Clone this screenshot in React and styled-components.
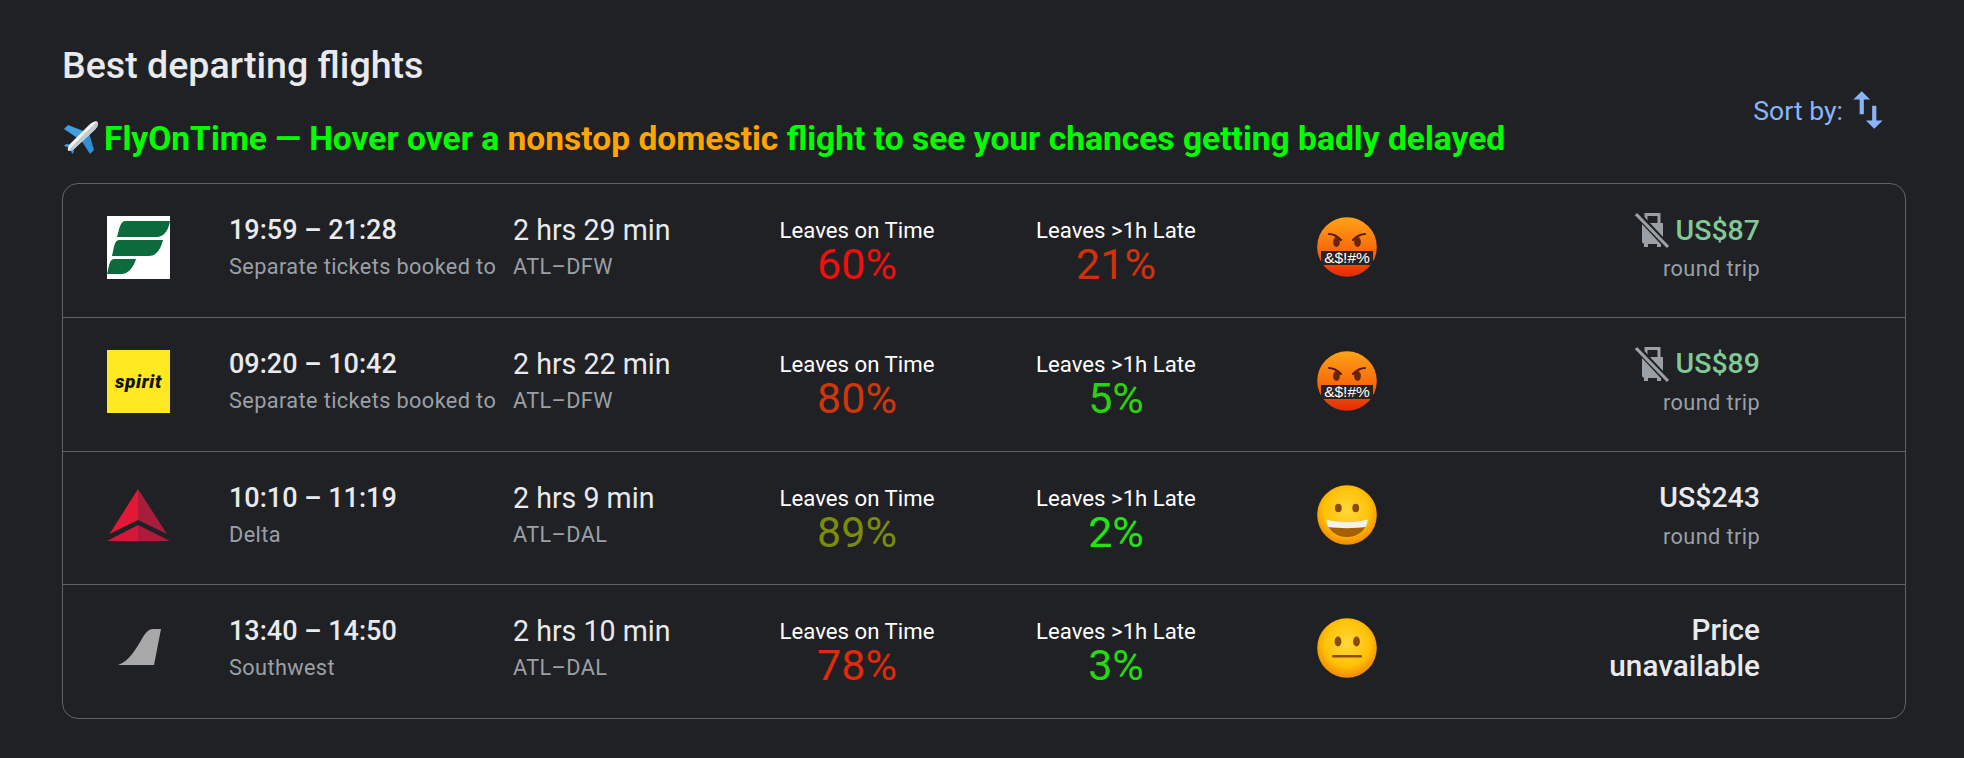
import styled, { createGlobalStyle } from 'styled-components'
import { MdSwapVert } from 'react-icons/md'

const GlobalStyle = createGlobalStyle`
  html, body {
    margin: 0;
    background: #202124;
    color: #e8eaed;
    font-family: Roboto, "Liberation Sans", sans-serif;
  }
`

const Page = styled.div`
  width: 1964px;
  height: 758px;
  box-sizing: border-box;
  padding: 45px 58px 0 62px;
  overflow: hidden;
`

const Header = styled.header`
  display: flex;
  justify-content: space-between;
  align-items: flex-start;
  height: 138px;
`

const Title = styled.h2`
  margin: 0;
  font-size: 37.6px;
  line-height: 40px;
  font-weight: 500;
  color: #e8eaed;
`

const Headline = styled.div`
  display: flex;
  align-items: center;
  gap: 4px;
  margin-top: 33px;
  height: 40px;
  font-size: 33.55px;
  font-weight: 700;
  color: #00ff00;
  white-space: pre;
`

const Orange = styled.span`
  color: #ffa500;
`

const SortBy = styled.div`
  display: flex;
  align-items: center;
  margin: 40px 13px 0 0;
  font-size: 26.6px;
  color: #8ab4f8;
`

const Panel = styled.div`
  display: flex;
  flex-direction: column;
  height: 536px;
  box-sizing: border-box;
  border: 1px solid #5f6368;
  border-radius: 16px;
`

const Row = styled.div`
  flex: 1;
  display: grid;
  grid-template-columns: 166px 284px 224px 240px 278px 184px 321px;
  align-items: start;
  padding-top: 24px;
  box-sizing: border-box;
  border-bottom: 1px solid #5f6368;

  &:last-child {
    border-bottom: none;
  }
`

const LogoCell = styled.div`
  padding: 8px 0 0 44px;
`

const LogoBox = styled.div`
  width: 63px;
  height: 63px;
  display: flex;
  align-items: center;
  justify-content: center;
  background: ${(p) => p.$bg || 'transparent'};
`

const SpiritText = styled.span`
  font-family: Roboto, sans-serif;
  font-size: 19px;
  font-weight: 900;
  font-style: italic;
  letter-spacing: 0.6px;
  color: #111;
`

const MainText = styled.div`
  margin-top: 2px;
  font-size: ${(p) => (p.$strong ? '27px' : '28.6px')};
  line-height: 40px;
  font-weight: ${(p) => (p.$strong ? 500 : 400)};
  color: #e8eaed;
  white-space: nowrap;
`

const SubText = styled.div`
  font-size: 21.7px;
  line-height: 28px;
  margin-top: 3px;
  letter-spacing: 0.4px;
  color: #9aa0a6;
  white-space: nowrap;
`

const Stat = styled.div`
  display: flex;
  flex-direction: column;
  align-items: center;
`

const StatLabel = styled.div`
  margin-top: 9px;
  font-size: 22.2px;
  line-height: 26px;
  color: #ffffff;
`

const StatValue = styled.div`
  margin-top: -2px;
  font-size: 43px;
  line-height: 46px;
  color: ${(p) => p.$color};
`

const EmojiCell = styled.div`
  display: flex;
  justify-content: center;
  padding-top: 7px;
`

const Price = styled.div`
  display: flex;
  flex-direction: column;
  align-items: flex-end;
  text-align: right;
`

const PriceLine = styled.div`
  display: flex;
  align-items: center;
  gap: 5px;
  margin-top: 2px;
  height: 40px;
  font-size: 28.5px;
  font-weight: 500;
  color: ${(p) => p.$color};
`

const RoundTrip = styled.div`
  margin-top: 5px;
  font-size: 21.7px;
  line-height: 28px;
  letter-spacing: 0.4px;
  color: #9aa0a6;
`

const Unavailable = styled.div`
  margin-top: 3px;
  font-size: 29.7px;
  line-height: 36px;
  font-weight: 500;
  color: #e8eaed;
`

const Plane = () => (
  <svg width="38" height="34" viewBox="0 0 36 34">
    <path d="M1 8 L5 4 L23 11 L16 18 Z" fill="#3f9fe0" />
    <path d="M27 33 L31 29 L26 12 L18 19 Z" fill="#2f8fd8" />
    <path d="M1 25 L3 23 L11 24 L8 27 Z" fill="#3f9fe0" />
    <path d="M9 33 L11 31 L10 24 L7 26 Z" fill="#2f8fd8" />
    <path d="M34 0.5 C36 2 35 6 31 9.5 L11 28 C9 30 5.5 30 5 29.5 C4.5 28.5 5 25 7 23 L26 4 C29 1 33 -0.5 34 0.5 Z" fill="#f1f3f4" />
    <path d="M34 0.5 C36 2 35 6 31 9.5 L11 28 C9 30 5.5 30 5 29.5 Z" fill="#c3c9ce" />
  </svg>
)

const NoBag = () => (
  <svg width="36" height="38" viewBox="0 0 36 38">
    <path d="M11 12 V3.5 H24 V16" fill="none" stroke="#9aa0a6" strokeWidth="3" />
    <path d="M8 12 H28 V30 C28 32 27 33 25 33 H10 C8 33 7 32 7 30 V13 Z" fill="#9aa0a6" />
    <rect x="9" y="33" width="4" height="3" fill="#9aa0a6" />
    <rect x="22" y="33" width="4" height="3" fill="#9aa0a6" />
    <path d="M3 4 L32 35" stroke="#202124" strokeWidth="6.5" />
    <path d="M1 3 L33 36" stroke="#9aa0a6" strokeWidth="3.2" />
  </svg>
)

const FrontierLogo = () => (
  <LogoBox $bg="#ffffff">
    <svg width="63" height="63" viewBox="0 0 63 63">
      <g fill="#0b6b3d">
        <path d="M18 5 H63 C62 12 58 21 50 21 H10 C12 15 13 5 18 5 Z" />
        <path d="M12 24 H56 C54 32 50 40 42 40 H5 C7 33 7 24 12 24 Z" />
        <path d="M7 43 H29 C27 50 22 58 14 58 H0 C2 52 2 43 7 43 Z" />
      </g>
    </svg>
  </LogoBox>
)

const SpiritLogo = () => (
  <LogoBox $bg="#fde821">
    <SpiritText>spirit</SpiritText>
  </LogoBox>
)

const DeltaLogo = () => (
  <LogoBox>
    <svg width="63" height="63" viewBox="0 0 63 63">
      <path d="M31 5 L2.5 50 L31 36 Z" fill="#e31837" />
      <path d="M31 5 L60 50 L31 36 Z" fill="#a81c3c" />
      <path d="M31 41 L0 57 H31 Z" fill="#d6163a" />
      <path d="M31 41 L63 57 H31 Z" fill="#b01a3a" />
    </svg>
  </LogoBox>
)

const SouthwestLogo = () => (
  <LogoBox>
    <svg width="63" height="63" viewBox="0 0 63 63">
      <path d="M11 48 C22 45 30 30 36 20 C39 15 42 12 46 12 L54 12 L47 48 Z" fill="#a8a8a8" />
    </svg>
  </LogoBox>
)

const FaceDefs = () => (
  <defs>
    <radialGradient id="yellowFace" cx="50%" cy="42%" r="55%">
      <stop offset="0%" stopColor="#ffd83a" />
      <stop offset="70%" stopColor="#ffc107" />
      <stop offset="100%" stopColor="#f39200" />
    </radialGradient>
    <linearGradient id="angryFace" x1="0" y1="0" x2="0" y2="1">
      <stop offset="0%" stopColor="#ffa319" />
      <stop offset="55%" stopColor="#f86a0a" />
      <stop offset="100%" stopColor="#e22a06" />
    </linearGradient>
  </defs>
)

const AngryFace = () => (
  <svg width="64" height="64" viewBox="0 0 64 64">
    <FaceDefs />
    <circle cx="32" cy="32" r="29.8" fill="url(#angryFace)" />
    <path d="M14 19 C18 19 23 22 26 25" stroke="#5a1a05" strokeWidth="2.2" fill="none" strokeLinecap="round" />
    <path d="M50 19 C46 19 41 22 38 25" stroke="#5a1a05" strokeWidth="2.2" fill="none" strokeLinecap="round" />
    <ellipse cx="21.5" cy="27" rx="3.4" ry="5" fill="#6b2408" />
    <ellipse cx="42.5" cy="27" rx="3.4" ry="5" fill="#6b2408" />
    <rect x="6" y="36" width="52" height="14" fill="#2a2220" />
    <text x="32" y="48" textAnchor="middle" fontFamily="'Liberation Sans', sans-serif" fontSize="15.5" fill="#ffffff">&amp;$!#%</text>
  </svg>
)

const GrinFace = () => (
  <svg width="64" height="64" viewBox="0 0 64 64">
    <FaceDefs />
    <circle cx="32" cy="32" r="29.8" fill="url(#yellowFace)" />
    <ellipse cx="23.3" cy="25" rx="3.4" ry="4.2" fill="#8a4b08" />
    <ellipse cx="40.7" cy="25" rx="3.4" ry="4.2" fill="#8a4b08" />
    <path d="M12 38 C24 41 40 41 52 38 C51 48 42 54 32 54 C22 54 13 48 12 38 Z" fill="#a65f04" />
    <path d="M11.5 36.5 C24 40 40 40 52.5 36.5 C52.5 39 52 41.5 50.5 44 C40 45.5 24 45.5 13.5 44 C12 41.5 11.5 39 11.5 36.5 Z" fill="#f2f2f2" />
  </svg>
)

const NeutralFace = () => (
  <svg width="64" height="64" viewBox="0 0 64 64">
    <FaceDefs />
    <circle cx="32" cy="32" r="29.8" fill="url(#yellowFace)" />
    <ellipse cx="23" cy="25.5" rx="3.4" ry="5" fill="#8a4b08" />
    <ellipse cx="41.5" cy="25.5" rx="3.4" ry="5" fill="#8a4b08" />
    <rect x="17" y="39" width="30" height="2.6" rx="1.3" fill="#8a4b08" />
  </svg>
)

const flights = [
  {
    logo: <FrontierLogo />,
    times: '19:59 – 21:28',
    airline: 'Separate tickets booked to',
    duration: '2 hrs 29 min',
    route: 'ATL–DFW',
    onTime: '60%',
    onTimeColor: '#f00f0f',
    late: '21%',
    lateColor: '#d2310a',
    face: <AngryFace />,
    price: 'US$87',
    cheap: true,
  },
  {
    logo: <SpiritLogo />,
    times: '09:20 – 10:42',
    airline: 'Separate tickets booked to',
    duration: '2 hrs 22 min',
    route: 'ATL–DFW',
    onTime: '80%',
    onTimeColor: '#d0360a',
    late: '5%',
    lateColor: '#2ad40c',
    face: <AngryFace />,
    price: 'US$89',
    cheap: true,
  },
  {
    logo: <DeltaLogo />,
    times: '10:10 – 11:19',
    airline: 'Delta',
    duration: '2 hrs 9 min',
    route: 'ATL–DAL',
    onTime: '89%',
    onTimeColor: '#7a8c08',
    late: '2%',
    lateColor: '#1fe60f',
    face: <GrinFace />,
    price: 'US$243',
  },
  {
    logo: <SouthwestLogo />,
    times: '13:40 – 14:50',
    airline: 'Southwest',
    duration: '2 hrs 10 min',
    route: 'ATL–DAL',
    onTime: '78%',
    onTimeColor: '#e02a0a',
    late: '3%',
    lateColor: '#22dc0f',
    face: <NeutralFace />,
  },
]

const FlightRow = ({ flight }) => (
  <Row>
    <LogoCell>{flight.logo}</LogoCell>
    <div>
      <MainText $strong>{flight.times}</MainText>
      <SubText>{flight.airline}</SubText>
    </div>
    <div>
      <MainText>{flight.duration}</MainText>
      <SubText>{flight.route}</SubText>
    </div>
    <Stat>
      <StatLabel>Leaves on Time</StatLabel>
      <StatValue $color={flight.onTimeColor}>{flight.onTime}</StatValue>
    </Stat>
    <Stat>
      <StatLabel>Leaves &gt;1h Late</StatLabel>
      <StatValue $color={flight.lateColor}>{flight.late}</StatValue>
    </Stat>
    <EmojiCell>{flight.face}</EmojiCell>
    <Price>
      {flight.price ? (
        <>
          <PriceLine $color={flight.cheap ? '#81c995' : '#e8eaed'}>
            {flight.cheap && <NoBag />}
            {flight.price}
          </PriceLine>
          <RoundTrip>round trip</RoundTrip>
        </>
      ) : (
        <Unavailable>
          Price
          <br />
          unavailable
        </Unavailable>
      )}
    </Price>
  </Row>
)

const App = () => (
  <Page>
    <GlobalStyle />
    <Header>
      <div>
        <Title>Best departing flights</Title>
        <Headline>
          <Plane />
          <span>
            FlyOnTime — Hover over a <Orange>nonstop domestic</Orange> flight to see your chances getting badly delayed
          </span>
        </Headline>
      </div>
      <SortBy>
        Sort by:
        <MdSwapVert size={50} />
      </SortBy>
    </Header>
    <Panel>
      {flights.map((flight) => (
        <FlightRow key={flight.times} flight={flight} />
      ))}
    </Panel>
  </Page>
)

export default App
